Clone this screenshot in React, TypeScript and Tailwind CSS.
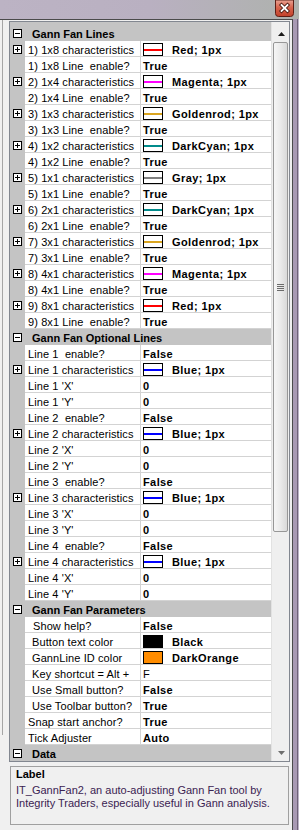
import React from "react";

type Row = {
  name: string;
  value: string;
  expand?: boolean;
  swatch?: "line" | "fill";
  swatchClass?: string;
  indent?: "none" | "one" | "two";
  regular?: boolean;
};

type Section = { title: string; rows: Row[] };

const lineRows = (
  label: string,
  color: string,
  cls: string
): Row[] => [
  {
    name: `${label} characteristics`,
    value: `${color}; 1px`,
    expand: true,
    swatch: "line",
    swatchClass: cls,
  },
  { name: `${label} Line  enable?`, value: "True" },
];

const optRows = (n: number): Row[] => [
  { name: `Line ${n}  enable?`, value: "False" },
  {
    name: `Line ${n} characteristics`,
    value: "Blue; 1px",
    expand: true,
    swatch: "line",
    swatchClass: "bg-[#0000ff]",
  },
  { name: `Line ${n} 'X'`, value: "0" },
  { name: `Line ${n} 'Y'`, value: "0" },
];

const sections: Section[] = [
  {
    title: "Gann Fan Lines",
    rows: [
      ...lineRows("1) 1x8", "Red", "bg-[#ff0000]"),
      ...lineRows("2) 1x4", "Magenta", "bg-[#ff00ff]"),
      ...lineRows("3) 1x3", "Goldenrod", "bg-[#daa520]"),
      ...lineRows("4) 1x2", "DarkCyan", "bg-[#008b8b]"),
      ...lineRows("5) 1x1", "Gray", "bg-[#808080]"),
      ...lineRows("6) 2x1", "DarkCyan", "bg-[#008b8b]"),
      ...lineRows("7) 3x1", "Goldenrod", "bg-[#daa520]"),
      ...lineRows("8) 4x1", "Magenta", "bg-[#ff00ff]"),
      ...lineRows("9) 8x1", "Red", "bg-[#ff0000]"),
    ],
  },
  {
    title: "Gann Fan Optional Lines",
    rows: [...optRows(1), ...optRows(2), ...optRows(3), ...optRows(4)],
  },
  {
    title: "Gann Fan Parameters",
    rows: [
      { name: "Show help?", value: "False", indent: "two" },
      {
        name: "Button text color",
        value: "Black",
        indent: "one",
        swatch: "fill",
        swatchClass: "bg-black",
      },
      {
        name: "GannLine ID color",
        value: "DarkOrange",
        indent: "one",
        swatch: "fill",
        swatchClass: "bg-[#ff8c00]",
      },
      { name: "Key shortcut = Alt +", value: "F", indent: "one", regular: true },
      { name: "Use Small button?", value: "False", indent: "one" },
      { name: "Use Toolbar button?", value: "True", indent: "one" },
      { name: "Snap start anchor?", value: "True" },
      { name: "Tick Adjuster", value: "Auto" },
    ],
  },
  { title: "Data", rows: [] },
];

function PlusMinus({ plus }: { plus: boolean }) {
  return (
    <svg width="9" height="9" viewBox="0 0 9 9" className="block">
      <rect x="0.5" y="0.5" width="8" height="8" fill="#ffffff" stroke="#000000" />
      <line x1="2" y1="4.5" x2="7" y2="4.5" stroke="#000000" />
      {plus && <line x1="4.5" y1="2" x2="4.5" y2="7" stroke="#000000" />}
    </svg>
  );
}

function CategoryRow({ title }: { title: string }) {
  return (
    <div className="flex h-[16px] bg-[#c4c4c4]">
      <div className="w-[15px] shrink-0 pl-[3px] pt-[4px]">
        <PlusMinus plus={false} />
      </div>
      <div className="pl-[7px] pt-[2px] text-[11px] leading-[14px] font-bold text-black whitespace-pre">
        {title}
      </div>
    </div>
  );
}

function PropRow({ r }: { r: Row }) {
  const indentCls =
    r.indent === "two" ? "pl-[8px]" : r.indent === "one" ? "pl-[7px]" : "pl-[3px]";
  return (
    <div className="flex h-[16px]">
      <div className="w-[15px] shrink-0 bg-[#c4c4c4] pl-[3px] pt-[4px]">
        {r.expand && <PlusMinus plus={true} />}
      </div>
      <div
        className={`w-[115px] shrink-0 bg-white border-b border-[#d3d3d3] pt-[2px] text-[11px] leading-[14px] text-black whitespace-pre overflow-hidden tracking-[0.1px] ${indentCls}`}
      >
        {r.name}
      </div>
      <div className="w-px shrink-0 bg-[#d3d3d3]" />
      <div className="w-[130px] shrink-0 bg-white border-b border-[#d3d3d3] pl-[2px] flex">
        {r.swatch && (
          <div
            className={`mt-[2px] w-[20px] h-[13px] shrink-0 border border-black flex items-center ${
              r.swatch === "fill" ? r.swatchClass : "bg-white"
            }`}
          >
            {r.swatch === "line" && <div className={`h-[2px] w-full ${r.swatchClass}`} />}
          </div>
        )}
        <div
          className={`pt-[2px] text-[11px] leading-[14px] text-black whitespace-pre tracking-[0.4px] ${
            r.regular ? "font-normal" : "font-bold"
          } ${r.swatch ? "ml-[9px]" : ""}`}
        >
          {r.value}
        </div>
      </div>
    </div>
  );
}

function Scrollbar() {
  return (
    <div className="w-[18px] shrink-0 bg-[#efefef] border-l border-[#e2e2e2] flex flex-col items-center">
      <div className="h-[20px] w-full flex justify-center pt-[10px] pl-px">
        <svg width="7" height="4" viewBox="0 0 7 4" className="block">
          <path d="M0 4 L3.5 0 L7 4 Z" fill="#1a1a1a" />
        </svg>
      </div>
      <div className="h-[490px] w-[15px] rounded-[2px] border border-[#979797] bg-gradient-to-r from-[#f6f6f6] via-[#eaeaea] to-[#d9d9d9] flex flex-col items-center justify-center">
        <div className="flex flex-col gap-px">
          <div className="h-px w-[7px] bg-[#6b6b6b]" />
          <div className="h-px w-[7px] bg-[#6b6b6b]" />
          <div className="h-px w-[7px] bg-[#6b6b6b]" />
          <div className="h-px w-[7px] bg-[#6b6b6b]" />
        </div>
      </div>
      <div className="flex-1" />
      <div className="h-[17px] w-full flex justify-center pt-[7px] pl-px">
        <svg width="7" height="4" viewBox="0 0 7 4" className="block">
          <path d="M0 0 L7 0 L3.5 4 Z" fill="#6e6e6e" />
        </svg>
      </div>
    </div>
  );
}

function CloseButton() {
  return (
    <svg width="19" height="17" viewBox="0 0 19 17" className="block">
      <defs>
        <linearGradient id="cb" x1="0" y1="0" x2="0" y2="1">
          <stop offset="0" stopColor="#e9a393" />
          <stop offset="0.45" stopColor="#d7644d" />
          <stop offset="1" stopColor="#c2412a" />
        </linearGradient>
      </defs>
      <path d="M0.5 0 V13.5 Q0.5 16.5 3.5 16.5 H15.5 Q18.5 16.5 18.5 13.5 V0 Z" fill="url(#cb)" stroke="#5d1f16" />
      <path d="M6.5 5 L12.5 11 M12.5 5 L6.5 11" stroke="#4a1a12" strokeWidth="3.6" strokeLinecap="square" />
      <path d="M6.5 5 L12.5 11 M12.5 5 L6.5 11" stroke="#ffffff" strokeWidth="1.8" strokeLinecap="square" />
    </svg>
  );
}

export default function App() {
  return (
    <div className="w-[299px] h-[830px] overflow-hidden flex flex-col bg-[#bbb2c3] font-['Liberation_Sans',Arial,sans-serif]">
      {/* title strip */}
      <div className="h-[19px] shrink-0 flex justify-end pr-[5px] bg-gradient-to-r from-[#bcb3c4] via-[#b9b0c1] to-[#aeb2ad]">
        <CloseButton />
      </div>
      <div className="flex-1 flex">
        <div className="w-[292px] shrink-0 bg-[#f0f0f0] border-t border-[#4b4b4b] flex">
          {/* left gutter */}
          <div className="w-[9px] shrink-0">
            <div className="ml-[2px] w-px h-[715px] bg-[#a5a5a5]" />
          </div>
          {/* main column */}
          <div className="w-[281px] shrink-0 pt-[1px] flex flex-col">
            <div className="border border-[#828790] flex bg-[#c4c4c4]">
              <div className="w-[261px] shrink-0 flex flex-col">
                <div className="h-[3px] bg-[#c4c4c4]" />
                {sections.map((s) => (
                  <React.Fragment key={s.title}>
                    <CategoryRow title={s.title} />
                    {s.rows.map((r) => (
                      <PropRow key={r.name} r={r} />
                    ))}
                  </React.Fragment>
                ))}
              </div>
              <Scrollbar />
            </div>
            {/* description panel */}
            <div className="mt-[4px] mx-px h-[59px] border border-[#a0a0a0] bg-[#f0f0f0] px-[5px] pt-[1px]">
              <div className="text-[11px] leading-[13px] font-bold text-black">Label</div>
              <div className="mt-[3px] text-[11px] leading-[13px] text-[#3b2352]">
                IT_GannFan2, an auto-adjusting Gann Fan tool by Integrity Traders, especially useful in Gann analysis.
              </div>
            </div>
          </div>
          <div className="w-[2px] shrink-0" />
        </div>
        <div className="w-px shrink-0 bg-[#4b4b4b]" />
        <div className="w-[4px] shrink-0 bg-[#a899b3]" />
        <div className="w-px shrink-0 bg-[#6e6278]" />
        <div className="w-px shrink-0 bg-[#bcb2c6]" />
      </div>
    </div>
  );
}
